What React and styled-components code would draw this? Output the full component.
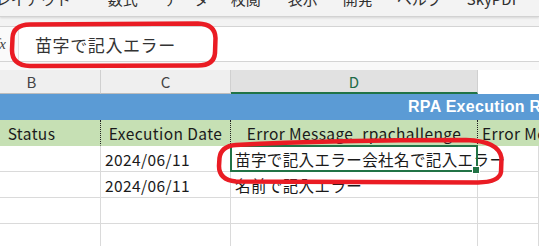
import React from 'react';
import styled, { createGlobalStyle } from 'styled-components';

const GlobalStyle = createGlobalStyle`
  html, body {
    margin: 0;
    padding: 0;
    background: #ffffff;
    overflow: hidden;
  }
  body {
    font-family: 'Noto Sans CJK JP', 'Noto Sans', sans-serif;
  }
`;

const Page = styled.div`
  position: relative;
  width: 539px;
  height: 246px;
  overflow: hidden;
  background: #ffffff;
`;

const TabStrip = styled.div`
  height: 16px;
  display: flex;
  background: #f3f3f3;
  border-bottom: 1px solid #d2d2d2;
  box-shadow: 0 1px 2px rgba(0, 0, 0, 0.12);
  overflow: hidden;
  position: relative;
  z-index: 1;
`;

const Tab = styled.span`
  position: relative;
  top: -10px;
  font-size: 15px;
  line-height: 18px;
  color: #303030;
  white-space: nowrap;
  margin-left: ${p => p.$gap}px;
`;

const Band = styled.div`
  height: ${p => p.$h}px;
  background: ${p => p.$bg || '#f3f3f3'};
`;

const FormulaBar = styled.div`
  height: 34px;
  display: flex;
  border-top: 1px solid #d4d4d4;
  border-bottom: 1px solid #d4d4d4;
  background: #ffffff;
`;

const FxBox = styled.div`
  width: 18px;
  display: flex;
  align-items: center;
  justify-content: flex-end;
  overflow: hidden;
  border-right: 1px solid #e2e2e2;
  background: #fafafa;
`;

const Fx = styled.span`
  font-family: 'Liberation Serif', serif;
  font-style: italic;
  font-size: 15px;
  color: #404040;
  margin-right: 12px;
`;

const FormulaInput = styled.div`
  flex: 1;
  display: flex;
  align-items: center;
  padding-left: 16px;
  font-size: 17px;
  color: #333333;
  letter-spacing: 0.6px;
`;

const Sheet = styled.div`
  margin-left: -37px;
  width: 576px;
`;

const Row = styled.div`
  display: grid;
  grid-template-columns: 138px 130px 247px 1fr;
  height: ${p => p.$h || 26}px;
  background: ${p => p.$bg || '#ffffff'};
`;

const HeaderCell = styled.div`
  display: flex;
  align-items: center;
  justify-content: center;
  font-size: 15px;
  color: ${p => (p.$active ? '#1e6b47' : '#444444')};
  background: ${p => (p.$active ? '#e1e1e1' : p.$blank ? '#ffffff' : '#efefef')};
  border-right: 1px solid ${p => (p.$blank ? 'transparent' : '#d0d0d0')};
  border-bottom: ${p => (p.$active ? '2px solid #217346' : p.$blank ? '0' : '1px solid #bcbcbc')};
  box-sizing: border-box;
`;

const TitleRow = styled.div`
  height: 26px;
  background: #5b9bd5;
  display: flex;
  align-items: center;
  padding-left: 445px;
  overflow: hidden;
  white-space: nowrap;
  font-family: 'Liberation Sans', 'Noto Sans', sans-serif;
  font-weight: bold;
  font-size: 16px;
  letter-spacing: 0.3px;
  color: #ffffff;
`;

const Cell = styled.div`
  position: relative;
  display: flex;
  align-items: center;
  justify-content: ${p => (p.$center ? 'center' : 'flex-start')};
  padding-left: ${p => (p.$center ? 0 : 4)}px;
  font-size: 15.5px;
  letter-spacing: 0.4px;
  color: #1a1a1a;
  white-space: nowrap;
  box-sizing: border-box;
  border-right: 1px ${p => (p.$dotted ? 'dotted #222222' : 'solid #dadada')};
  border-bottom: 1px solid ${p => (p.$noLine ? 'transparent' : '#dadada')};
  z-index: ${p => (p.$over ? 2 : 0)};
`;

const Selection = styled.div`
  position: absolute;
  left: -1px;
  top: -1px;
  right: -1px;
  bottom: -1px;
  border: 2px solid #217346;
  pointer-events: none;
`;

const Handle = styled.div`
  position: absolute;
  right: -4px;
  bottom: -4px;
  width: 6px;
  height: 6px;
  background: #217346;
  border: 1px solid #ffffff;
`;

const Overlay = styled.svg`
  position: absolute;
  left: 0;
  top: 0;
  pointer-events: none;
  z-index: 5;
`;

const tabs = [
  { label: 'ージレイアウト', gap: -34 },
  { label: '数式', gap: 37 },
  { label: 'データ', gap: 26 },
  { label: '校閲', gap: 22 },
  { label: '表示', gap: 27 },
  { label: '開発', gap: 25 },
  { label: 'ヘルプ', gap: 24 },
  { label: 'SkyPDF', gap: 25 },
];

const dataRows = [
  { date: '2024/06/11', msg: '苗字で記入エラー会社名で記入エラー', selected: true },
  { date: '2024/06/11', msg: '名前で記入エラー' },
  {},
  {},
];

export default function App() {
  return (
    <Page>
      <GlobalStyle />
      <TabStrip>
        {tabs.map(t => (
          <Tab key={t.label} $gap={t.gap}>{t.label}</Tab>
        ))}
      </TabStrip>
      <Band $h={9} />
      <FormulaBar>
        <FxBox><Fx>fx</Fx></FxBox>
        <FormulaInput>苗字で記入エラー</FormulaInput>
      </FormulaBar>
      <Band $h={8} $bg="#f8f8f8" />
      <Sheet>
        <Row $h={24}>
          <HeaderCell>B</HeaderCell>
          <HeaderCell>C</HeaderCell>
          <HeaderCell $active>D</HeaderCell>
          <HeaderCell $blank />
        </Row>
        <TitleRow>RPA Execution Report</TitleRow>
        <Row $bg="#c6e0b4">
          <Cell $center $dotted $noLine>Status</Cell>
          <Cell $center $dotted $noLine>Execution Date</Cell>
          <Cell $center $dotted $noLine>Error Message_rpachallenge</Cell>
          <Cell $noLine>Error Message</Cell>
        </Row>
        {dataRows.map((r, i) => (
          <Row key={i}>
            <Cell />
            <Cell>{r.date}</Cell>
            <Cell $over={r.selected} style={{ borderRightColor: r.selected ? 'transparent' : undefined }}>
              {r.msg}
              {r.selected && (
                <Selection>
                  <Handle />
                </Selection>
              )}
            </Cell>
            <Cell />
          </Row>
        ))}
      </Sheet>
      <Overlay width="539" height="246" viewBox="0 0 539 246">
        <path
          d="M 30 24.5 L 198 23.5 Q 215 24 215.5 38 L 215 53 Q 214 65.5 198 65.5 L 30 66 Q 12 65.5 12 50 L 12.5 38 Q 13 25 30 24.5 Z"
          fill="none"
          stroke="#ea1c24"
          strokeWidth="4.5"
        />
        <path
          d="M 236 145 Q 330 140 466 140 Q 499 141 501.5 158 L 501 172 Q 499.5 182 478 182.5 L 236 181.5 Q 219 180 219 166 L 219.5 158 Q 221 146 236 145 Z"
          fill="none"
          stroke="#ea1c24"
          strokeWidth="4.5"
        />
      </Overlay>
    </Page>
  );
}
